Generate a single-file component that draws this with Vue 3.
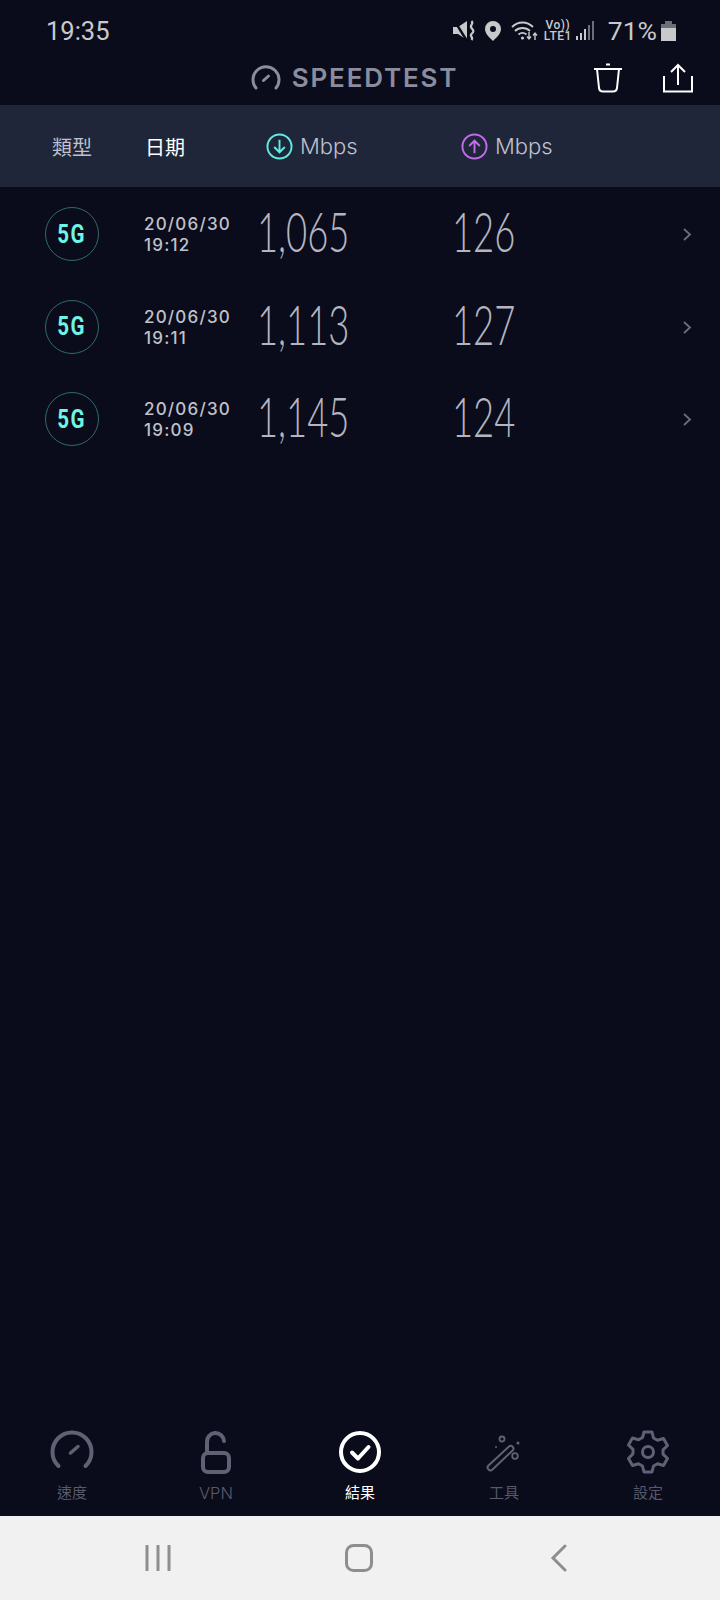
<script setup>
const rows = [
  { date: "20/06/30", time: "19:12", down: "1,065", up: "126" },
  { date: "20/06/30", time: "19:11", down: "1,113", up: "127" },
  { date: "20/06/30", time: "19:09", down: "1,145", up: "124" },
];
</script>

<template>
  <div class="page">
    <div class="status">
      <span class="clock">19:35</span>
      <div class="status-right">
        <svg viewBox="0 0 22 22" width="22" height="22">
          <path d="M0 7h5l9-6v19l-9-6H0z" fill="#c9c9cc" />
          <path d="M1 0l13 21" stroke="#0a0c1b" stroke-width="2.400" />
          <path d="M18.500 1c3 3-2.500 4 0 7s2.500 3.500 0 6 2.500 3 0 6" fill="none" stroke="#c9c9cc" stroke-width="2.200" />
        </svg>
        <svg class="st-pin" viewBox="0 0 18 22" width="18" height="22">
          <path fill-rule="evenodd" d="M9 1a8 8 0 0 1 8 8c0 5-5 9-8 12-3-3-8-7-8-12a8 8 0 0 1 8-8zm0 5a3 3 0 1 0 0 6 3 3 0 0 0 0-6z" fill="#c9c9cc" />
        </svg>
        <svg class="st-wifi" viewBox="0 0 28 22" width="28" height="22">
          <g fill="none" stroke="#c9c9cc" stroke-width="1.800">
            <path d="M1 7c6-6 15-6 21 0" />
            <path d="M4 11c4-4 11-4 15 0" />
            <path d="M7.500 14.500c2.500-2 5.500-2 8 0" />
          </g>
          <circle cx="11.500" cy="18" r="1.600" fill="#c9c9cc" />
          <path d="M18 12v7m-2-2.500l2 2.500 2-2.500M24 20v-7m-2 2.500l2-2.500 2 2.500" fill="none" stroke="#c9c9cc" stroke-width="1.400" />
        </svg>
        <div class="st-lte"><span>Vo))</span><span>LTE1</span></div>
        <svg class="st-bars" viewBox="0 0 20 22" width="20" height="22">
          <rect x="0" y="16" width="2" height="4" fill="#c9c9cc" />
          <rect x="4" y="13" width="2" height="7" fill="#c9c9cc" />
          <rect x="8" y="9" width="2" height="11" fill="#c9c9cc" />
          <rect x="12" y="5" width="2" height="15" fill="#6d6f78" />
          <rect x="16" y="1" width="2" height="19" fill="#6d6f78" />
        </svg>
        <span class="st-pct">71%</span>
        <svg viewBox="0 0 15 22" width="15" height="22">
          <path d="M4 1h7v3h4v4H0V4h4z" fill="#6d6f78" />
          <rect x="0" y="8" width="15" height="13" fill="#c9c9cc" />
        </svg>
      </div>
    </div>

    <div class="appbar">
      <div class="brand">
        <svg viewBox="0 0 30 26" width="30" height="26">
          <path d="M5 23a13 13 0 1 1 20 0" fill="none" stroke="#8b8d9f" stroke-width="3" stroke-linecap="round" />
          <path d="M12.500 15.500l5-4.500" stroke="#8b8d9f" stroke-width="3" stroke-linecap="round" />
        </svg>
        <span>SPEEDTEST</span>
      </div>
      <div class="actions">
        <svg viewBox="0 0 30 30" width="30" height="30">
          <path d="M1 6h28M13 1.500h4" stroke="#fff" stroke-width="2" fill="none" />
          <path d="M4 6l2 19q.5 3.500 4 3.500h10q3.500 0 4-3.500l2-19" stroke="#fff" stroke-width="2" fill="none" />
        </svg>
        <svg viewBox="0 0 30 30" width="30" height="30">
          <path d="M1 13v15.500h28V13M15 22V2M8 9l7-7 7 7" stroke="#fff" stroke-width="2" fill="none" />
        </svg>
      </div>
    </div>

    <div class="thead">
      <span class="th-type">類型</span>
      <span class="th-date">日期</span>
      <div class="th-speed">
        <svg viewBox="0 0 28 28" width="27" height="27">
          <circle cx="14" cy="14" r="12.500" fill="none" stroke="#5eeee0" stroke-width="2" />
          <path d="M14 7v13M8.500 14.500L14 20l5.500-5.500" fill="none" stroke="#5eeee0" stroke-width="2" />
        </svg>
        <span>Mbps</span>
      </div>
      <div class="th-speed">
        <svg viewBox="0 0 28 28" width="27" height="27">
          <circle cx="14" cy="14" r="12.500" fill="none" stroke="#c06bea" stroke-width="2" />
          <path d="M14 21V8M8.500 13.500L14 8l5.500 5.500" fill="none" stroke="#c06bea" stroke-width="2" />
        </svg>
        <span>Mbps</span>
      </div>
    </div>

    <div class="list">
      <div v-for="r in rows" :key="r.time" class="row">
        <div class="badge"><span>5G</span></div>
        <div class="when">
          <span>{{ r.date }}</span>
          <span>{{ r.time }}</span>
        </div>
        <div class="num num-down"><span>{{ r.down }}</span></div>
        <div class="num num-up"><span>{{ r.up }}</span></div>
        <svg class="chev" viewBox="0 0 9 13" width="9" height="13">
          <path d="M1 1l6 5.500L1 12" fill="none" stroke="#6a6d7c" stroke-width="1.800" />
        </svg>
      </div>
    </div>

    <div class="tabs">
      <div class="tab">
        <svg viewBox="0 0 44 44" width="44" height="44">
          <path d="M8.500 36a19.500 19.500 0 1 1 27 0" fill="none" stroke="#5f6274" stroke-width="4" stroke-linecap="round" />
          <path d="M20.500 23l7.500-6.500" stroke="#5f6274" stroke-width="3.500" stroke-linecap="round" />
        </svg>
        <span>速度</span>
      </div>
      <div class="tab">
        <svg viewBox="0 0 44 44" width="44" height="44">
          <rect x="9" y="23" width="26" height="19" rx="5" fill="none" stroke="#5f6274" stroke-width="4" />
          <path d="M13 23v-11a8.500 8.500 0 0 1 17-1" fill="none" stroke="#5f6274" stroke-width="4" stroke-linecap="round" />
        </svg>
        <span class="tab-vpn">VPN</span>
      </div>
      <div class="tab tab-on">
        <svg viewBox="0 0 44 44" width="44" height="44">
          <circle cx="22" cy="22" r="19" fill="none" stroke="#fff" stroke-width="4" />
          <path d="M14 22.500l6 6 10.500-11.500" fill="none" stroke="#fff" stroke-width="4" stroke-linecap="round" stroke-linejoin="round" />
        </svg>
        <span>結果</span>
      </div>
      <div class="tab">
        <svg viewBox="0 0 44 44" width="44" height="44">
          <path d="M6.500 35.500L27 16.500a2.700 2.700 0 0 1 3.800 3.800L10.500 39.500a2.800 2.800 0 0 1-4-4z" fill="none" stroke="#5f6274" stroke-width="2" />
          <circle cx="20" cy="9" r="2.500" fill="none" stroke="#5f6274" stroke-width="1.800" />
          <circle cx="33" cy="26" r="2.800" fill="none" stroke="#5f6274" stroke-width="1.800" />
          <circle cx="36" cy="13" r="1.600" fill="#5f6274" />
          <circle cx="14" cy="17" r="1" fill="#5f6274" />
        </svg>
        <span>工具</span>
      </div>
      <div class="tab">
        <svg viewBox="0 0 44 44" width="44" height="44">
          <path d="M18 2h8l1.500 6 4 2.200 6-1.700 4 7-4.500 4.300v4.400l4.500 4.300-4 7-6-1.700-4 2.200-1.500 6h-8l-1.500-6-4-2.200-6 1.700-4-7L7 23.700v-4.400L2.500 15l4-7 6 1.700 4-2.200z" fill="none" stroke="#5f6274" stroke-width="3" stroke-linejoin="round" />
          <circle cx="22" cy="22" r="5.500" fill="none" stroke="#5f6274" stroke-width="3" />
        </svg>
        <span>設定</span>
      </div>
    </div>

    <div class="navbar">
      <svg viewBox="0 0 26 26" width="26" height="26">
        <path d="M2 1v24M13 1v24M24 1v24" stroke="#8e8e8e" stroke-width="3" stroke-linecap="round" />
      </svg>
      <svg class="nav-home" viewBox="0 0 28 28" width="28" height="28">
        <rect x="1.500" y="1.500" width="25" height="25" rx="7" fill="none" stroke="#8e8e8e" stroke-width="3" />
      </svg>
      <svg viewBox="0 0 18 28" width="18" height="28">
        <path d="M15 2L3 14l12 12" fill="none" stroke="#8e8e8e" stroke-width="3" stroke-linecap="round" />
      </svg>
    </div>
  </div>
</template>

<style scoped>
.page {
  width: 720px;
  height: 1600px;
  display: flex;
  flex-direction: column;
  background: #0a0c1b;
  font-family: "Inter", "Noto Sans CJK TC", sans-serif;
  overflow: hidden;
}
.status {
  height: 60px;
  flex: none;
  display: flex;
  align-items: center;
  justify-content: space-between;
  padding: 1px 44px 0 46px;
  box-sizing: border-box;
}
.clock {
  font-family: "Roboto", sans-serif;
  font-size: 25.500px;
  color: #c9c9cc;
}
.status-right {
  display: flex;
  align-items: center;
  gap: 8px;
}
.st-pin { margin-left: 1px; }
.st-wifi { margin-left: 1px; }
.st-lte {
  display: flex;
  flex-direction: column;
  align-items: center;
  font-family: "Roboto", sans-serif;
  font-size: 12px;
  line-height: 11px;
  color: #c9c9cc;
  font-weight: 500;
  letter-spacing: .5px;
  margin-left: -3px;
}
.st-bars { margin-left: -4px; }
.st-pct {
  font-family: "Roboto", sans-serif;
  font-size: 26.500px;
  color: #c9c9cc;
  margin-left: 4px;
  margin-right: -4px;
}
.appbar {
  height: 45px;
  flex: none;
  position: relative;
  display: flex;
  align-items: center;
  justify-content: center;
}
.brand {
  display: flex;
  align-items: center;
  gap: 11px;
  margin-right: 11px;
  margin-bottom: 10px;
  color: #8b8d9f;
  font-size: 26px;
  font-weight: 600;
  letter-spacing: 1.800px;
}
.actions {
  position: absolute;
  right: 27px;
  top: 3px;
  display: flex;
  gap: 40px;
}
.thead {
  height: 82px;
  flex: none;
  display: flex;
  align-items: center;
  background: #20263a;
  color: #bfc1cc;
  font-size: 20px;
}
.th-type { width: 145px; padding-left: 52px; box-sizing: border-box; }
.th-date { width: 121px; color: #fff; }
.th-speed {
  width: 195px;
  display: flex;
  align-items: center;
  gap: 7px;
  font-size: 22px;
  font-weight: 300;
}
.list { flex: 1; padding-top: 1px; }
.row {
  height: 92.600px;
  display: flex;
  align-items: center;
  position: relative;
}
.badge {
  width: 54px;
  height: 54px;
  margin-left: 45px;
  box-sizing: border-box;
  border: 1px solid #2f6a70;
  border-radius: 50%;
  display: flex;
  align-items: center;
  justify-content: center;
  flex: none;
}
.badge span {
  font-family: "Roboto", sans-serif;
  font-size: 25px;
  font-weight: 700;
  color: #6ff5e6;
  letter-spacing: 2px;
  display: inline-block;
  transform: scaleX(.82);
}
.when {
  width: 116px;
  margin-left: 45px;
  margin-top: 2px;
  flex: none;
  display: flex;
  flex-direction: column;
  color: #c0c1c9;
  font-size: 17px;
  font-weight: 500;
  line-height: 21px;
  letter-spacing: 1.200px;
}
.num {
  flex: none;
  font-family: "Lato", sans-serif;
  font-weight: 300;
  font-size: 56px;
  line-height: 60px;
  color: #b4b5bf;
  white-space: nowrap;
  margin: -6px 3px 0 -3px;
}
.num span {
  display: inline-block;
  transform: scaleX(.65);
  transform-origin: left center;
}
.num-down { width: 195px; }
.num-up { width: 230px; }
.chev { position: absolute; left: 683px; top: 40px; }
.tabs {
  height: 115px;
  flex: none;
  display: flex;
}
.tab {
  width: 144px;
  display: flex;
  flex-direction: column;
  align-items: center;
  padding-top: 29px;
  box-sizing: border-box;
  color: #565a6b;
  font-size: 15px;
  line-height: 20px;
  gap: 9px;
}
.tab-vpn { font-size: 16.500px; font-weight: 300; }
.tab-on { color: #fff; }
.navbar {
  height: 84px;
  flex: none;
  background: #f1f1f1;
  display: flex;
  align-items: center;
  justify-content: space-between;
  padding: 0 152px 0 145px;
}
.nav-home { margin-right: 3px; }
</style>

<style>
html, body { background: #0a0c1b; }
</style>
